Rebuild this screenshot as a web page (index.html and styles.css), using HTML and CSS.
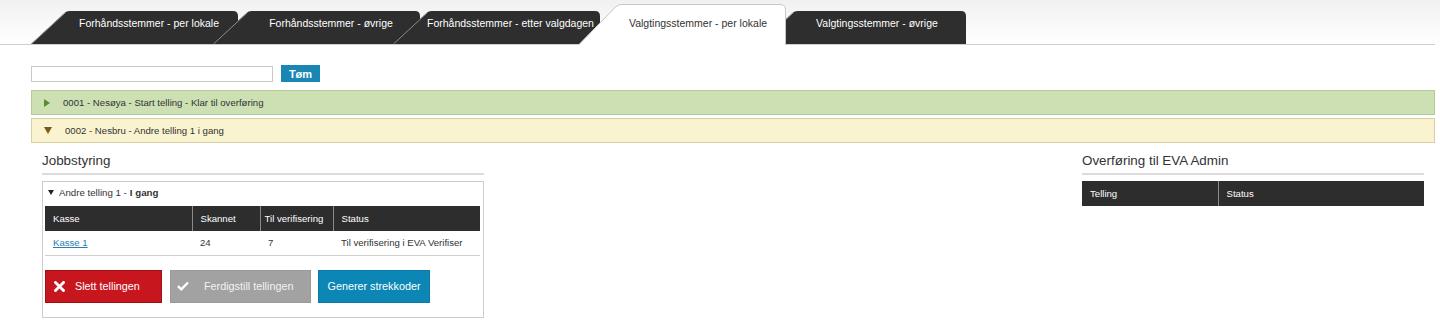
FILE: index.html
```html
<!DOCTYPE html>
<html lang="no">
<head>
<meta charset="utf-8">
<title>Opptelling</title>
<link rel="stylesheet" href="styles.css">
</head>
<body>
<div class="top">
  <nav class="tabbar">
    <div class="tab tab-1">
      <svg class="tab-bg" width="207" height="33" viewBox="0 0 207 33"><path class="tab-fill" d="M0 33 L33.5 2 Q35.5 0 38.5 0 L202 0 Q207 0 207 5 L207 33 Z"/><path class="tab-edge" d="M0.5 33 L34 2"/></svg>
      <span class="tab-label">Forhåndsstemmer - per lokale</span>
    </div>
    <div class="tab tab-2">
      <svg class="tab-bg" width="207" height="33" viewBox="0 0 207 33"><path class="tab-fill" d="M0 33 L33.5 2 Q35.5 0 38.5 0 L202 0 Q207 0 207 5 L207 33 Z"/><path class="tab-edge" d="M0.5 33 L34 2"/></svg>
      <span class="tab-label">Forhåndsstemmer - øvrige</span>
    </div>
    <div class="tab tab-3">
      <svg class="tab-bg" width="207" height="33" viewBox="0 0 207 33"><path class="tab-fill" d="M0 33 L33.5 2 Q35.5 0 38.5 0 L202 0 Q207 0 207 5 L207 33 Z"/><path class="tab-edge" d="M0.5 33 L34 2"/></svg>
      <span class="tab-label">Forhåndsstemmer - etter valgdagen</span>
    </div>
    <div class="tab tab-4 tab-active">
      <svg class="tab-bg" width="208" height="41" viewBox="0 0 208 41"><path class="tab-fill-active" d="M0.5 41 L37.5 3 Q40 0.5 43.5 0.5 L202 0.5 Q207.5 0.5 207.5 6 L207.5 41"/></svg>
      <span class="tab-label">Valgtingsstemmer - per lokale</span>
    </div>
    <div class="tab tab-5">
      <svg class="tab-bg" width="207" height="33" viewBox="0 0 207 33"><path class="tab-fill" d="M0 33 L33.5 2 Q35.5 0 38.5 0 L202 0 Q207 0 207 5 L207 33 Z"/><path class="tab-edge" d="M0.5 33 L34 2"/></svg>
      <span class="tab-label">Valgtingsstemmer - øvrige</span>
    </div>
  </nav>
</div>

<main class="page">
  <div class="search">
    <input class="search-input" type="text">
    <button class="btn-clear" type="button">Tøm</button>
  </div>

  <div class="area area-green"><span class="tri-right"></span>0001 - Nesøya - Start telling - Klar til overføring</div>
  <div class="area area-yellow"><span class="tri-down"></span>0002 - Nesbru - Andre telling 1 i gang</div>

  <div class="panels">
    <section class="panel panel-left">
      <h2 class="panel-title">Jobbstyring</h2>
      <div class="job-box">
        <div class="job-title"><span class="tri-small"></span>Andre telling 1 - <b>I gang</b></div>
        <table class="grid job-grid">
          <thead>
            <tr><th class="c-kasse">Kasse</th><th class="c-skann">Skannet</th><th class="c-verif">Til verifisering</th><th class="c-status">Status</th></tr>
          </thead>
          <tbody>
            <tr><td><a class="link" href="#">Kasse 1</a></td><td>24</td><td>7</td><td>Til verifisering i EVA Verifiser</td></tr>
          </tbody>
        </table>
        <div class="actions">
          <button class="btn btn-red" type="button">
            <svg class="btn-icon" width="11" height="11" viewBox="0 0 11 11"><path d="M1.5 1.5 L9.5 9.5 M9.5 1.5 L1.5 9.5" stroke="#fff" stroke-width="2.8" stroke-linecap="square"/></svg>
            <span>Slett tellingen</span>
          </button>
          <button class="btn btn-gray" type="button">
            <svg class="btn-icon" width="12" height="10" viewBox="0 0 12 10"><path d="M1 5.2 L4.3 8.3 L11 1.5" fill="none" stroke="#fff" stroke-width="2.4"/></svg>
            <span>Ferdigstill tellingen</span>
          </button>
          <button class="btn btn-blue" type="button"><span>Generer strekkoder</span></button>
        </div>
      </div>
    </section>

    <section class="panel panel-right">
      <h2 class="panel-title">Overføring til EVA Admin</h2>
      <table class="grid transfer-grid">
        <thead>
          <tr><th class="c-telling">Telling</th><th>Status</th></tr>
        </thead>
      </table>
    </section>
  </div>
</main>
</body>
</html>
```

FILE: styles.css
```css
* { box-sizing: border-box; }

body {
  margin: 0;
  background: #fff;
  color: #333;
  font-family: "Liberation Sans", Arial, sans-serif;
}

/* ---------- tabs ---------- */
.top {
  background: linear-gradient(#f1f1f1, #fbfbfb 70%, #fff);
  padding-right: 5px;
}

.tabbar {
  display: flex;
  align-items: flex-end;
  height: 45px;
  padding-left: 31px;
  border-bottom: 1px solid #cfcfcf;
}

.tab {
  position: relative;
  flex: none;
  width: 207px;
  height: 33px;
}
.tab-1 { z-index: 1; }
.tab-2 { z-index: 2; margin-left: -25px; }
.tab-3 { z-index: 3; margin-left: -27px; }
.tab-4 { z-index: 5; margin-left: -22px; }
.tab-5 { z-index: 4; margin-left: -27px; }

.tab-bg {
  position: absolute;
  left: 0;
  top: 0;
}
.tab-fill { fill: #2e2e2e; }
.tab-edge { stroke: #8c8c8c; stroke-width: 1; fill: none; }
.tab-fill-active { fill: #fff; stroke: #c6c6c6; stroke-width: 1; }

.tab-label {
  position: relative;
  display: block;
  padding: 5px 0 0 29px;
  font-size: 10.5px;
  line-height: 14px;
  text-align: center;
  white-space: nowrap;
  color: #fff;
}
.tab-3 .tab-label {
  text-align: left;
  padding-left: 34px;
}

.tab-active {
  width: 208px;
  height: 41px;
  margin-bottom: -1px;
}
.tab-active .tab-label {
  padding-top: 12px;
  padding-left: 32px;
  color: #333;
}

/* ---------- page ---------- */
.page {
  padding: 0 5px 0 31px;
}

.search {
  display: flex;
  align-items: center;
  gap: 8px;
  margin-top: 20px;
  height: 17px;
}
.search-input {
  width: 242px;
  height: 16px;
  margin: 0;
  border: 1px solid #c9c9c9;
  padding: 0 3px;
}
.btn-clear {
  width: 39px;
  height: 17px;
  margin: 0;
  padding: 0;
  border: 0;
  background: #1a86b3;
  color: #fff;
  font-family: inherit;
  font-size: 11px;
  font-weight: bold;
}

.area {
  display: flex;
  align-items: center;
  height: 25px;
  margin-top: 8px;
  padding-left: 12px;
  border: 1px solid;
  font-size: 9.6px;
  color: #333;
}
.area-green {
  background: #cde0b4;
  border-color: #b3cb97;
}
.area-yellow {
  margin-top: 3px;
  background: #faf3cf;
  border-color: #d8cfa2;
}

.tri-right {
  width: 0;
  height: 0;
  margin-right: 13px;
  border-top: 4px solid transparent;
  border-bottom: 4px solid transparent;
  border-left: 6px solid #5b8d2b;
}
.tri-down {
  width: 0;
  height: 0;
  margin-right: 13px;
  border-left: 4.5px solid transparent;
  border-right: 4.5px solid transparent;
  border-top: 7px solid #7a5a1c;
}

/* ---------- panels ---------- */
.panels {
  display: flex;
  justify-content: space-between;
  align-items: flex-start;
  margin-top: 10px;
  padding: 0 11px;
}
.panel-left { width: 442px; }
.panel-right { width: 342px; }

.panel-title {
  margin: 0;
  padding-bottom: 4px;
  border-bottom: 2px solid #dcdcdc;
  font-size: 13.4px;
  font-weight: normal;
  line-height: 16px;
  color: #333;
}

.job-box {
  margin-top: 6px;
  border: 1px solid #cdcdcd;
  padding: 3px 3px 14px 2px;
}

.job-title {
  display: flex;
  align-items: center;
  height: 14px;
  padding-left: 3px;
  font-size: 9.7px;
  color: #333;
}
.job-title b { margin-left: 3px; }
.tri-small {
  width: 0;
  height: 0;
  margin-right: 5px;
  border-left: 3px solid transparent;
  border-right: 3px solid transparent;
  border-top: 5px solid #222;
}

.grid {
  width: 100%;
  border-collapse: collapse;
  font-size: 9.6px;
}
.grid th {
  height: 25px;
  padding: 0 8px;
  background: #2d2d2d;
  color: #fff;
  text-align: left;
  font-weight: normal;
  white-space: nowrap;
  border-left: 1px solid #8a8a8a;
}
.grid th:first-child { border-left: 0; }
.grid td {
  height: 24px;
  padding: 0 8px;
  border-bottom: 1px solid #cfcfcf;
  color: #333;
  white-space: nowrap;
}

.job-grid { margin-top: 7px; width: 435px; table-layout: fixed; }
.c-kasse { width: 147px; }
.c-skann { width: 68px; }
.c-verif { width: 73px; }
.c-telling { width: 136px; }
.job-grid .c-verif { padding: 0 4px; }

.transfer-grid { margin-top: 6px; }

.link {
  color: #2a7db0;
  text-decoration: underline;
}

.actions {
  display: flex;
  gap: 8px;
  margin-top: 14px;
}
.btn {
  display: flex;
  align-items: center;
  height: 33px;
  margin: 0;
  padding: 0 0 0 8px;
  border: 1px solid;
  font-family: inherit;
  font-size: 10.8px;
  color: #fff;
}
.btn-icon { flex: none; }
.btn-red {
  width: 117px;
  background: #c8161f;
  border-color: #a30f16;
}
.btn-red .btn-icon { margin-right: 10px; }
.btn-gray {
  width: 141px;
  background: #a2a2a2;
  border-color: #999;
  color: #f2f2f2;
  padding-left: 6px;
}
.btn-gray .btn-icon { margin-right: 15px; }
.btn-blue {
  width: 112px;
  margin-left: -1px;
  justify-content: center;
  padding: 0;
  background: #0c86b5;
  border-color: #0b7aa6;
}
```
